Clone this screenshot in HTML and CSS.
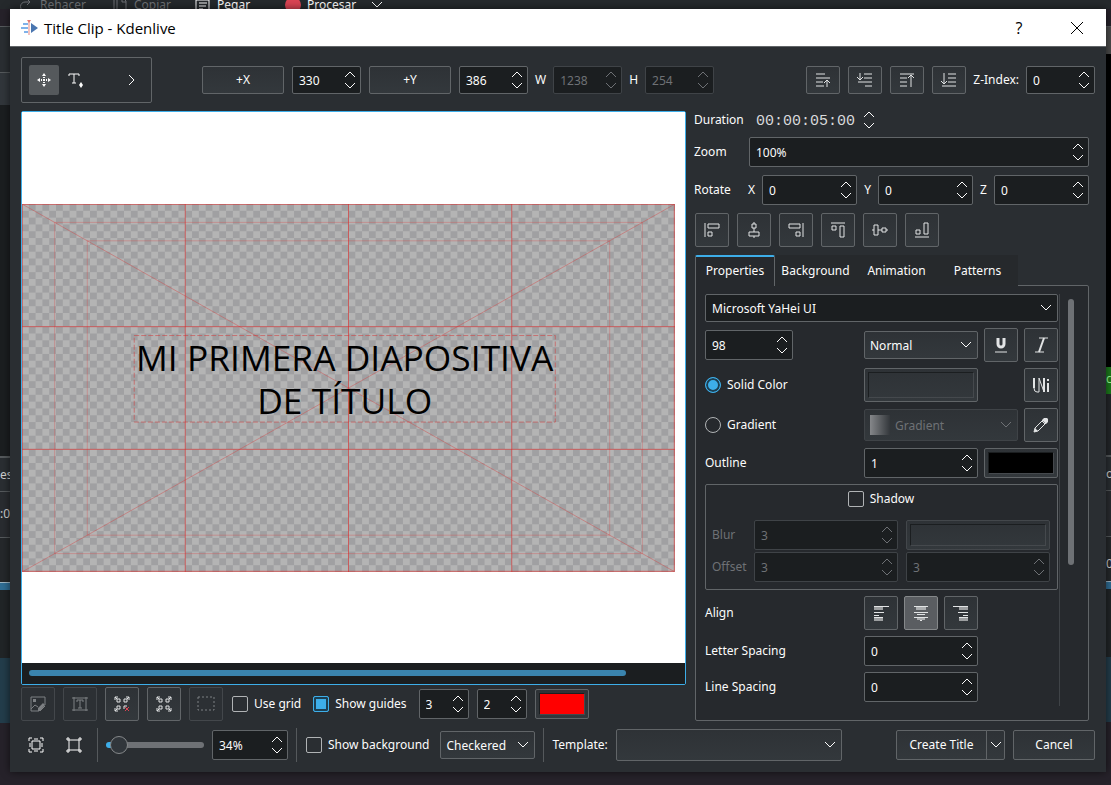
FILE: index.html
```html
<!DOCTYPE html>
<html lang="en">
<head>
    <meta charset="UTF-8">
    <meta name="viewport" content="width=device-width, initial-scale=1.0">
    <title>Title Clip - Kdenlive</title>
    <link rel="stylesheet" href="styles.css">
</head>
<body>
    <!-- shared glyphs -->
    <svg class="defs" width="0" height="0" aria-hidden="true">
        <symbol id="updown" viewBox="0 0 12 20"><path d="M1 7l5-5 5 5M1 13l5 5 5-5"/></symbol>
        <symbol id="down" viewBox="0 0 12 8"><path d="M1 1l5 5 5-5"/></symbol>
    </svg>

    <!-- main window, mostly hidden by the dialog -->
    <div class="app">
        <div class="app-toolbar">
            <svg class="dim" width="16" height="16" viewBox="0 0 16 16"><path d="M12 5H7a4 4 0 0 0 0 9M9 2l3 3-3 3"/></svg>
            <span class="dim app-redo">Rehacer</span>
            <svg class="dim" width="16" height="16" viewBox="0 0 16 16"><path d="M2 1v14M5 1h6l3 3v11H5zM10 1v4h4"/></svg>
            <span class="dim app-copy">Copiar</span>
            <svg width="16" height="16" viewBox="0 0 16 16"><path d="M1 3h13v12H1zM4 6h8M4 9h7M4 12h4"/></svg>
            <span class="app-paste">Pegar</span>
            <i class="record"></i>
            <span class="app-render">Procesar</span>
            <svg width="12" height="8"><use href="#down"/></svg>
        </div>
        <div class="app-left">
            <div class="s-bar"></div>
            <div class="s-dock"></div>
            <div class="s-field"></div>
            <div class="s-view"></div>
            <div class="s-label">es</div>
            <div class="s-time">:0</div>
            <div class="s-gap"></div>
            <div class="s-ruler"></div>
            <div class="s-track"></div>
            <div class="s-clip"></div>
        </div>
        <div class="app-right">
            <div class="s-bar"></div>
            <div class="s-grey"></div>
            <div class="s-monitor"></div>
            <div class="s-green">c</div>
            <div class="s-panel"></div>
            <div class="s-label">o</div>
            <div class="s-time"></div>
            <div class="s-gap">0</div>
            <div class="s-ruler"></div>
            <div class="s-track"></div>
            <div class="s-clip"></div>
        </div>
    </div>

    <main class="dialog">
        <header class="titlebar">
            <svg class="logo" width="20" height="18" viewBox="0 0 20 18">
                <path fill="#7fb2ea" d="M3 4h5v2H3zM1 8h7v2H1zM4 12h4v2H4z"/>
                <path fill="#f3c3bf" d="M8 2h2v14H8z"/><path fill="#e07a74" d="M7 1h4L9 4z"/>
                <path fill="#4a76b0" d="M11 4l7 5-7 5z"/>
            </svg>
            <h1>Title Clip - Kdenlive</h1>
            <button class="win-btn" aria-label="Help">?</button>
            <button class="win-btn" aria-label="Close"><svg width="14" height="14" viewBox="0 0 14 14"><path d="M1 1l12 12M13 1L1 13"/></svg></button>
        </header>

        <div class="toolbar">
            <div class="toolbox">
                <button class="tool active" aria-label="Selection tool"><svg width="16" height="16" viewBox="0 0 16 16"><path class="fill" d="M8 1l2 3H6zM8 15l2-3H6zM1 8l3-2v4zM15 8l-3-2v4zM7 7h2v2H7zM7 5h2v1H7zM7 10h2v1H7zM5 7h1v2H5zM10 7h1v2h-1z"/></svg></button>
                <button class="tool" aria-label="Add text"><svg width="16" height="16" viewBox="0 0 16 16"><path d="M1 4V2h10v2M6 2v9M4 11h4"/><path class="fill" d="M13 10l2 3-2 3-2-3z"/></svg></button>
                <button class="tool more" aria-label="More tools"><svg width="8" height="12" viewBox="0 0 8 12"><path d="M1 1l5 5-5 5"/></svg></button>
            </div>
            <button class="btn w-coord">+X</button>
            <span class="spin w-num"><input type="text" value="330" aria-label="X"><svg width="12" height="20"><use href="#updown"/></svg></span>
            <button class="btn w-coord">+Y</button>
            <span class="spin w-num"><input type="text" value="386" aria-label="Y"><svg width="12" height="20"><use href="#updown"/></svg></span>
            <label for="w">W</label>
            <span class="spin w-num disabled"><input type="text" id="w" value="1238" disabled><svg width="12" height="20"><use href="#updown"/></svg></span>
            <label for="h">H</label>
            <span class="spin w-num disabled"><input type="text" id="h" value="254" disabled><svg width="12" height="20"><use href="#updown"/></svg></span>
            <div class="z-tools">
                <button class="btn icon" aria-label="Raise"><svg width="16" height="16" viewBox="0 0 16 16"><path d="M1 2h9M1 6h14M1 10h7M1 14h8M12 15V8M9 11l3-3 3 3"/></svg></button>
                <button class="btn icon" aria-label="Lower"><svg width="16" height="16" viewBox="0 0 16 16"><path d="M7 2h8M7 6h8M1 10h14M8 14h7M3 1v7M0 5l3 3 3-3"/></svg></button>
                <button class="btn icon" aria-label="Raise to top"><svg width="16" height="16" viewBox="0 0 16 16"><path d="M1 2h14M1 6h7M1 10h7M1 14h7M12 15V3M9 6l3-3 3 3"/></svg></button>
                <button class="btn icon" aria-label="Lower to bottom"><svg width="16" height="16" viewBox="0 0 16 16"><path d="M7 2h8M7 6h8M7 10h8M1 14h14M3 1v11M0 9l3 3 3-3"/></svg></button>
            </div>
            <label for="zindex">Z-Index:</label>
            <span class="spin w-num"><input type="text" id="zindex" value="0"><svg width="12" height="20"><use href="#updown"/></svg></span>
        </div>

        <div class="body">
            <section class="editor">
                <div class="canvas">
                    <div class="view">
                        <svg class="slide" width="653" height="368" viewBox="0 0 1920 1080" preserveAspectRatio="none">
                            <defs>
                                <pattern id="checks" width="40" height="40" patternUnits="userSpaceOnUse">
                                    <path fill="#b4b4b4" d="M0 0h40v40H0z"/>
                                    <path fill="#a0a0a2" d="M20 0h20v20H20zM0 20h20v20H0z"/>
                                </pattern>
                            </defs>
                            <rect width="1920" height="1080" fill="url(#checks)"/>
                            <g class="safe">
                                <rect x="96" y="54" width="1728" height="972"/>
                                <rect x="192" y="108" width="1536" height="864"/>
                            </g>
                            <path class="diagonals" d="M0 0L1920 1080M1920 0L0 1080"/>
                            <path class="guides" d="M480 0v1080M960 0v1080M1440 0v1080M0 360h1920M0 720h1920"/>
                            <rect class="guides frame" x="1" y="1" width="1917" height="1077"/>
                            <rect class="selection" x="330" y="386" width="1238" height="254"/>
                            <text x="949" y="490">MI PRIMERA DIAPOSITIVA</text>
                            <text x="949" y="616">DE TÍTULO</text>
                        </svg>
                    </div>
                    <div class="hscroll"><div class="thumb"></div></div>
                </div>

                <div class="tools-row">
                    <button class="btn icon tall disabled" disabled aria-label="Background image"><svg width="16" height="16" viewBox="0 0 16 16"><path d="M9 15H1V1h14v8M1 13l4-4 3 2M8 14l6-6M10 15l5-5"/><path class="fill" d="M3 3h3v3H3zM8 12l5-5 2 2-5 6H8z"/></svg></button>
                    <button class="btn icon tall disabled" disabled aria-label="Fit text"><svg width="16" height="16" viewBox="0 0 16 16"><path d="M2 1v14M14 1v14M0 2h16M0 14h16M5 6V4h6v2M8 4v8M6 12h4"/></svg></button>
                    <button class="btn icon tall" aria-label="Unselect all"><svg width="16" height="16" viewBox="0 0 16 16"><path d="M1 4V1h3M12 1h3v3M1 12v3h3M1 1l2 2M15 1l-2 2M1 15l2-2M3 3h3v3H3zM10 3h3v3h-3zM3 10h3v3H3zM10 13v-3h3"/><path class="red" d="M11 11l4 4M15 11l-4 4"/></svg></button>
                    <button class="btn icon tall" aria-label="Select all"><svg width="16" height="16" viewBox="0 0 16 16"><path d="M1 4V1h3M12 1h3v3M1 12v3h3M15 12v3h-3M1 1l2 2M15 1l-2 2M1 15l2-2M15 15l-2-2M3 3h3v3H3zM10 3h3v3h-3zM3 10h3v3H3zM10 10h3v3h-3z"/></svg></button>
                    <button class="btn icon tall disabled" disabled aria-label="Select region"><svg width="18" height="16" viewBox="0 0 18 16"><path stroke-dasharray="2 2" d="M1 1h16v13H1z"/></svg></button>
                    <label class="check"><input type="checkbox">Use grid</label>
                    <label class="check"><input type="checkbox" checked>Show guides</label>
                    <span class="spin w-guide"><input type="text" value="3" aria-label="Vertical guides"><svg width="12" height="20"><use href="#updown"/></svg></span>
                    <span class="spin w-guide"><input type="text" value="2" aria-label="Horizontal guides"><svg width="12" height="20"><use href="#updown"/></svg></span>
                    <button class="swatch w-swatch" aria-label="Guide color"><span class="red-fill"></span></button>
                </div>
            </section>

            <aside class="side">
                <div class="line duration">
                    <label for="duration">Duration</label>
                    <span class="timecode"><input type="text" id="duration" value="00:00:05:00"><svg width="12" height="20"><use href="#updown"/></svg></span>
                </div>
                <div class="line zoom">
                    <label for="zoom">Zoom</label>
                    <span class="spin grow"><input type="text" id="zoom" value="100%"><svg width="12" height="20"><use href="#updown"/></svg></span>
                </div>
                <div class="line rotate">
                    <span class="caption">Rotate</span>
                    <label for="rx">X</label>
                    <span class="spin"><input type="text" id="rx" value="0"><svg width="12" height="20"><use href="#updown"/></svg></span>
                    <label for="ry">Y</label>
                    <span class="spin"><input type="text" id="ry" value="0"><svg width="12" height="20"><use href="#updown"/></svg></span>
                    <label for="rz">Z</label>
                    <span class="spin"><input type="text" id="rz" value="0"><svg width="12" height="20"><use href="#updown"/></svg></span>
                </div>
                <div class="line arrange">
                    <button class="btn icon tall" aria-label="Align left"><svg width="16" height="16" viewBox="0 0 16 16"><path d="M1 1v14M4 2h11v4H4zM4 10h4v4H4z"/></svg></button>
                    <button class="btn icon tall" aria-label="Center horizontally"><svg width="16" height="16" viewBox="0 0 16 16"><path d="M6 2h4v4H6zM3 10h10v4H3zM8 6v4M8 0v2M8 14v2"/></svg></button>
                    <button class="btn icon tall" aria-label="Align right"><svg width="16" height="16" viewBox="0 0 16 16"><path d="M15 1v14M1 2h11v4H1zM8 10h4v4H8z"/></svg></button>
                    <button class="btn icon tall" aria-label="Align top"><svg width="16" height="16" viewBox="0 0 16 16"><path d="M1 1h14M2 4h4v4H2zM10 4h4v11h-4z"/></svg></button>
                    <button class="btn icon tall" aria-label="Center vertically"><svg width="16" height="16" viewBox="0 0 16 16"><path d="M2 3h4v10H2zM10 6h4v4h-4zM6 8h4M0 8h2M14 8h2"/></svg></button>
                    <button class="btn icon tall" aria-label="Align bottom"><svg width="16" height="16" viewBox="0 0 16 16"><path d="M1 15h14M2 8h4v4H2zM10 1h4v11h-4z"/></svg></button>
                </div>

                <nav class="tabs">
                    <button class="tab active">Properties</button>
                    <button class="tab">Background</button>
                    <button class="tab">Animation</button>
                    <button class="tab">Patterns</button>
                </nav>
                <div class="panel">
                    <div class="props">
                        <span class="select dark full"><select aria-label="Font"><option>Microsoft YaHei UI</option></select><svg width="12" height="8"><use href="#down"/></svg></span>

                        <span class="spin w-size"><input type="text" value="98" aria-label="Font size"><svg width="12" height="20"><use href="#updown"/></svg></span>
                        <span class="select"><select aria-label="Font weight"><option>Normal</option></select><svg width="12" height="8"><use href="#down"/></svg></span>
                        <button class="btn icon tall" aria-label="Underline"><svg width="16" height="16" viewBox="0 0 16 16"><path class="bold" d="M5 1v6a3 3 0 0 0 6 0V1"/><path d="M2 15h12"/></svg></button>
                        <button class="btn icon tall" aria-label="Italic"><svg width="16" height="16" viewBox="0 0 16 16"><path d="M6 1h9M2 15h9"/><path class="semi" d="M11 1L6 15"/></svg></button>

                        <label class="radio"><input type="radio" name="fill" checked>Solid Color</label>
                        <button class="swatch tall" aria-label="Text color"><span class="empty"></span></button>
                        <button class="btn icon tall last" aria-label="Insert Unicode character"><svg width="18" height="16" viewBox="0 0 18 16"><path d="M2 1v10q0 4 3 4h2M7 1v14M7 1l5 14V1"/><path class="semi" d="M2 1v10M12 1v14M16 6v9M16 2v2"/></svg></button>

                        <label class="radio"><input type="radio" name="fill">Gradient</label>
                        <span class="select gradient disabled"><i class="gradient-chip"></i><select disabled aria-label="Gradient"><option>Gradient</option></select><svg width="12" height="8"><use href="#down"/></svg></span>
                        <button class="btn icon tall" aria-label="Edit gradient"><svg width="16" height="16" viewBox="0 0 16 16"><path d="M1 15l1-4 9-9q2-1 3 0t0 3l-9 9zM9 4l3 3"/><path class="fill" d="M1 15l1-4 3 3zM9 3l2-2h3l1 1v3l-2 2z"/></svg></button>

                        <label for="outline">Outline</label>
                        <span class="spin"><input type="text" id="outline" value="1"><svg width="12" height="20"><use href="#updown"/></svg></span>
                        <button class="swatch outline" aria-label="Outline color"><span class="black-fill"></span></button>

                        <fieldset class="shadow full">
                            <label class="check"><input type="checkbox">Shadow</label>
                            <label class="dim" for="blur">Blur</label>
                            <span class="spin disabled"><input type="text" id="blur" value="3" disabled><svg width="12" height="20"><use href="#updown"/></svg></span>
                            <button class="swatch disabled" disabled aria-label="Shadow color"><span class="empty"></span></button>
                            <label class="dim" for="offset">Offset</label>
                            <span class="spin disabled"><input type="text" id="offset" value="3" disabled><svg width="12" height="20"><use href="#updown"/></svg></span>
                            <span class="spin disabled"><input type="text" value="3" disabled aria-label="Vertical offset"><svg width="12" height="20"><use href="#updown"/></svg></span>
                        </fieldset>

                        <span class="row-label">Align</span>
                        <div class="aligns">
                            <button class="btn icon tall" aria-label="Left"><svg width="16" height="16" viewBox="0 0 16 16"><path class="fill" d="M1 1h15v1H1zM1 7h10v1H1zM1 10h5v1H1zM1 12h9v1H1z"/><path class="fill soft" d="M1 2h9v3H1zM1 13h9v3H1z"/></svg></button>
                            <button class="btn icon tall pressed" aria-label="Center"><svg width="16" height="16" viewBox="0 0 16 16"><path class="fill" d="M1 1h14v1H1zM1 7h14v1H1zM4 9h8v1H4zM1 12h14v1H1zM7 15h2v1H7z"/><path class="fill soft" d="M3 2h10v3H3zM4 13h8v2H4z"/></svg></button>
                            <button class="btn icon tall" aria-label="Right"><svg width="16" height="16" viewBox="0 0 16 16"><path class="fill" d="M0 1h15v1H0zM5 7h10v1H5zM10 10h5v1h-5zM6 12h9v1H6z"/><path class="fill soft" d="M6 2h9v3H6zM6 13h9v3H6z"/></svg></button>
                        </div>

                        <label class="row-label" for="letter">Letter Spacing</label>
                        <span class="spin"><input type="text" id="letter" value="0"><svg width="12" height="20"><use href="#updown"/></svg></span>

                        <label class="row-label" for="linesp">Line Spacing</label>
                        <span class="spin"><input type="text" id="linesp" value="0"><svg width="12" height="20"><use href="#updown"/></svg></span>
                    </div>
                    <div class="vscroll"><div class="thumb"></div></div>
                </div>
            </aside>
        </div>

        <footer class="bottom">
            <button class="flat" aria-label="Fit zoom"><svg width="16" height="16" viewBox="0 0 16 16"><path d="M1 4V1h3M12 1h3v3M1 12v3h3M15 12v3h-3M4 4h8v8H4zM6 2h4M6 14h4M2 6v4M14 6v4"/></svg></button>
            <button class="flat" aria-label="Original size"><svg width="16" height="16" viewBox="0 0 16 16"><path d="M3 3h10v10H3zM1 1h2v2H1zM13 1h2v2h-2zM1 13h2v2H1zM13 13h2v2h-2z"/></svg></button>
            <i class="sep"></i>
            <input type="range" class="slider" min="1" max="400" value="20" aria-label="Canvas zoom">
            <span class="spin w-zoom"><input type="text" value="34%" aria-label="Zoom level"><svg width="12" height="20"><use href="#updown"/></svg></span>
            <i class="sep"></i>
            <label class="check"><input type="checkbox">Show background</label>
            <span class="select w-bg"><select aria-label="Background type"><option>Checkered</option></select><svg width="12" height="8"><use href="#down"/></svg></span>
            <i class="sep"></i>
            <label for="template">Template:</label>
            <span class="select template"><select id="template"><option></option></select><svg width="12" height="8"><use href="#down"/></svg></span>
            <div class="actions">
                <button class="btn create">Create Title</button>
                <button class="btn create-more" aria-label="Create options"><svg width="12" height="8"><use href="#down"/></svg></button>
                <button class="btn w-coord cancel">Cancel</button>
            </div>
        </footer>
    </main>
</body>
</html>
```
FILE: styles.css
```css
:root {
    --bg: #2a2e32;
    --view: #1b1e20;
    --panel: #26292d;
    --line: #616568;
    --line-dim: #3f4347;
    --text: #fcfcfc;
    --dim: #6e7175;
    --accent: #3daee9;
}

* {
    box-sizing: border-box;
}

body {
    margin: 0;
    min-height: 100vh;
    position: relative;
    padding: 9px 5px 13px 10px;
    display: flex;
    overflow-x: hidden;
    background: #26222a;
    color: var(--text);
    font: 12px/16px "Noto Sans", "Open Sans", sans-serif;
}

button, input, select {
    font: inherit;
    color: inherit;
    margin: 0;
}

svg {
    fill: none;
    stroke: currentColor;
    stroke-width: 1;
    flex: none;
    display: block;
}

svg .fill {
    fill: currentColor;
    stroke: none;
}

svg .soft {
    opacity: 0.6;
}

svg .bold {
    stroke-width: 3;
}

svg .semi {
    stroke-width: 2;
}

svg .red {
    stroke: #da4453;
}

.defs {
    position: absolute;
}

.dim {
    color: var(--dim);
}

/* main window in the background */
.app {
    position: absolute;
    inset: 0;
    overflow: hidden;
    display: grid;
    grid-template-columns: 10px 1fr 5px;
    grid-template-rows: 9px 1fr;
}

.app-toolbar {
    grid-column: 1 / -1;
    display: flex;
    align-items: center;
    padding-left: 18px;
    gap: 6px;
    background: #25292c;
}

.app-redo {
    width: 66px;
}

.app-copy {
    width: 55px;
}

.app-paste {
    width: 62px;
}

.app-render {
    width: 58px;
}

.record {
    width: 16px;
    height: 16px;
    flex: none;
    border-radius: 50%;
    background: #da4453;
}

.app-left,
.app-right {
    display: flex;
    flex-direction: column;
    color: #d0d0d0;
}

.app-right {
    grid-column: 3;
}

.app-left > div,
.app-right > div {
    flex: none;
}

.s-bar {
    height: 18px;
    border-bottom: 1px solid #55595c;
}

.s-dock {
    height: 46px;
    background: var(--bg);
    border-bottom: 1px solid #55595c;
}

.s-field {
    height: 32px;
    background: #31363b;
}

.s-view {
    height: 351px;
    background: var(--view);
}

.s-grey {
    height: 27px;
    background: #4b4b4b;
}

.s-monitor {
    height: 313px;
    background: #000;
}

.s-green {
    height: 27px;
    background: #1c7a1c;
    color: #9f9;
    line-height: 24px;
}

.s-panel {
    height: 61px;
    background: #232629;
}

.s-label {
    height: 36px;
    line-height: 34px;
    background: var(--bg);
    border-top: 2px solid #55595c;
    border-bottom: 1px solid #55595c;
}

.s-time {
    height: 46px;
    line-height: 44px;
    background: #292c30;
    border-bottom: 1px solid #55595c;
}

.s-gap {
    height: 44px;
    line-height: 54px;
    background: #25282b;
}

.s-ruler {
    height: 8px;
    background: #2f6d94;
    border-top: 1px solid #9fb6c4;
}

.s-track {
    height: 68px;
    background: #212527;
}

.s-clip {
    height: 65px;
    background: #233d4b;
}

/* dialog */
.dialog {
    position: relative;
    flex: 1;
    min-width: 1080px;
    display: flex;
    flex-direction: column;
    background: var(--bg);
    box-shadow: 0 0 8px rgba(0, 0, 0, 0.6);
}

.titlebar {
    display: flex;
    align-items: center;
    height: 38px;
    padding-left: 10px;
    background: #fff;
    border-bottom: 1px solid #616568;
    color: #000;
}

.logo {
    stroke: none;
}

.titlebar h1 {
    flex: 1;
    margin: 0 0 0 4px;
    font: 15px/20px "Open Sans", sans-serif;
}

.win-btn {
    width: 58px;
    height: 37px;
    padding: 0;
    border: 0;
    background: none;
    display: grid;
    place-items: center;
    font: 16px "Open Sans", sans-serif;
}

/* controls */
.btn,
.swatch,
.select {
    border: 1px solid var(--line);
    border-radius: 2px;
    background: linear-gradient(#2e3236, #33383c);
}

.btn {
    height: 28px;
    padding: 0;
    text-align: center;
}

.btn.icon {
    width: 34px;
    display: grid;
    place-items: center;
    flex: none;
    color: #e2e4e5;
}

.btn.tall,
.swatch.tall {
    height: 34px;
}

.btn.pressed {
    background: #5a5d61;
    border-color: #85888a;
}

.btn.disabled {
    border-color: #43474b;
    background: #2c3034;
    color: #7d8083;
}

.spin {
    display: flex;
    align-items: center;
    height: 30px;
    min-width: 0;
    padding-right: 4px;
    border: 1px solid var(--line);
    border-radius: 2px;
    background: var(--view);
}

.spin input {
    flex: 1;
    width: 0;
    min-width: 0;
    padding: 1px 0 0 6px;
    border: 0;
    background: none;
    outline: none;
}

.disabled,
.disabled input,
.disabled select {
    color: var(--dim);
    border-color: var(--line-dim);
}

.select {
    position: relative;
    display: flex;
    align-items: center;
    height: 28px;
    padding-right: 5px;
}

.select select {
    flex: 1;
    min-width: 0;
    padding: 1px 0 0 5px;
    border: 0;
    background: none;
    appearance: none;
    opacity: 1;
}

.select.dark {
    background: var(--view);
}

.select.dark select {
    padding-left: 6px;
}

.swatch {
    display: flex;
    height: 30px;
    padding: 3px;
}

.swatch span {
    flex: 1;
    align-self: stretch;
    border: 1px solid #1b1e20;
    border-right-color: #45494d;
    border-bottom-color: #45494d;
}

.swatch.disabled {
    border-color: #43474b;
}

.red-fill {
    background: #f00;
}

.black-fill {
    background: #000;
}

.check,
.radio {
    display: flex;
    align-items: center;
    gap: 6px;
}

.check input,
.radio input {
    appearance: none;
    width: 16px;
    height: 16px;
    border: 1px solid #b0b3b5;
    border-radius: 2px;
    background: none;
}

.check input:checked {
    border-color: var(--accent);
    background: var(--accent);
    box-shadow: inset 0 0 0 2px #1c3f52;
}

.radio input {
    border-radius: 50%;
}

.radio input:checked {
    border-color: var(--accent);
    background: var(--accent);
    box-shadow: inset 0 0 0 2px #1c3f52;
}

.w-coord {
    width: 82px;
}

.w-num {
    width: 69px;
}

.w-guide {
    width: 50px;
}

.w-size {
    width: 88px;
}

.w-zoom {
    width: 76px;
}

.w-bg {
    width: 95px;
}

.w-swatch {
    width: 54px;
}

/* top toolbar */
.toolbar {
    display: flex;
    align-items: center;
    gap: 8px;
    padding: 10px 11px 8px;
}

.toolbar .spin {
    height: 28px;
}

.toolbar label {
    margin: 0 -1px;
}

.toolbox {
    display: flex;
    align-items: center;
    width: 131px;
    height: 46px;
    margin-right: 42px;
    padding: 0 7px;
    border: 1px solid var(--line);
    border-radius: 2px;
}

.tool {
    width: 30px;
    height: 30px;
    padding: 0;
    border: 0;
    border-radius: 2px;
    background: none;
    display: grid;
    place-items: center;
    margin-right: 2px;
}

.tool.active {
    background: #55595c;
}

.tool.more {
    margin-left: auto;
    margin-right: -3px;
}

.z-tools {
    display: flex;
    gap: 8px;
    margin-left: auto;
}

/* main area */
.body {
    flex: 1;
    display: flex;
    gap: 8px;
    padding: 0 17px 0 11px;
}

.editor {
    flex: 1;
    min-width: 0;
    display: flex;
    flex-direction: column;
}

.canvas {
    flex: 1;
    display: flex;
    flex-direction: column;
    border: 1px solid var(--accent);
    border-radius: 2px;
}

.view {
    flex: 1;
    display: flex;
    align-items: center;
    overflow: hidden;
    background: #fff;
}

.slide text {
    font: 104px "Open Sans", sans-serif;
    fill: #000;
    stroke: none;
    text-anchor: middle;
}

.slide path,
.slide rect {
    vector-effect: non-scaling-stroke;
}

.slide defs path,
.slide > rect {
    stroke: none;
    shape-rendering: crispEdges;
}

.safe rect {
    stroke: rgba(225, 60, 60, 0.3);
}

.diagonals {
    stroke: rgba(215, 60, 60, 0.4);
}

.slide .guides {
    stroke: rgba(222, 40, 40, 0.6);
    shape-rendering: crispEdges;
}

.slide .selection {
    stroke: rgba(215, 50, 50, 0.5);
    stroke-dasharray: 5 2;
    shape-rendering: crispEdges;
}

.hscroll {
    height: 21px;
    padding: 7px;
    background: var(--view);
}

.hscroll .thumb {
    width: 92%;
    height: 6px;
    border-radius: 3px;
    background: #3a84ae;
}

.tools-row {
    display: flex;
    align-items: center;
    gap: 8px;
    padding-top: 2px;
}

.tools-row .check:first-of-type {
    margin: 0 4px 0 1px;
}

.tools-row .check + .spin {
    margin-left: 4px;
}

/* right column */
.side {
    width: 395px;
    display: flex;
    flex-direction: column;
}

.line {
    display: flex;
    align-items: center;
}

.duration {
    height: 18px;
}

.duration label {
    width: 62px;
}

.timecode {
    display: flex;
    align-items: center;
    gap: 8px;
}

.timecode input {
    width: 99px;
    padding: 3px 0 0;
    border: 0;
    background: none;
    color: #d8dadb;
    font: 15px/18px "Liberation Mono", monospace;
}

.zoom {
    margin-top: 8px;
}

.zoom label {
    width: 55px;
}

.grow {
    flex: 1;
}

.rotate {
    margin-top: 8px;
    gap: 7px;
}

.rotate .caption {
    width: 47px;
}

.rotate .spin {
    flex: 1;
}

.arrange {
    margin: 8px 0 8px 1px;
    gap: 8px;
}

.tabs {
    position: relative;
    display: flex;
    margin-bottom: -1px;
    padding-left: 1px;
}

.tab {
    height: 31px;
    width: 81px;
    padding: 0;
    border: 1px solid transparent;
    background: #26292c;
}

.tab.active {
    width: 80px;
    padding-bottom: 2px;
    border-color: var(--line);
    border-top: 2px solid var(--accent);
    border-bottom: 0;
    border-radius: 2px 2px 0 0;
    background: var(--panel);
}

.panel {
    flex: 1;
    display: flex;
    margin-left: 1px;
    padding: 8px 14px 14px 9px;
    border: 1px solid var(--line);
    border-radius: 0 2px 2px 2px;
    background: var(--panel);
}

.props {
    flex: 1;
    display: grid;
    grid-template-columns: 1fr 114px 34px 34px;
    gap: 6px;
    align-items: center;
    align-content: start;
    padding-right: 1px;
    border-right: 1px solid var(--line-dim);
}

.full {
    grid-column: 1 / -1;
}

.last {
    grid-column: 4;
}

.row-label {
    grid-column: 1;
}

.gradient {
    grid-column: span 2;
    height: 32px;
}

.gradient-chip {
    width: 20px;
    height: 20px;
    margin-left: 5px;
    background: linear-gradient(90deg, #85878a, #33373b);
}

.outline {
    grid-column: span 2;
}

.shadow {
    min-width: 0;
    margin: 0;
    padding: 6px 7px 7px 6px;
    border: 1px solid var(--line);
    border-radius: 2px;
    display: grid;
    grid-template-columns: 34px 1fr 1fr;
    gap: 2px 8px;
    align-items: center;
}

.shadow .check {
    grid-column: 1 / -1;
    justify-self: center;
    margin-bottom: 11px;
}

.aligns {
    display: flex;
    justify-content: space-between;
}

.vscroll {
    padding: 5px 0 0 8px;
}

.vscroll .thumb {
    width: 6px;
    height: 266px;
    border-radius: 3px;
    background: #6e7175;
}

/* footer */
.bottom {
    display: flex;
    align-items: center;
    gap: 8px;
    padding: 7px 11px 10px;
}

.flat {
    width: 30px;
    height: 34px;
    padding: 0;
    border: 0;
    background: none;
    display: grid;
    place-items: center;
}

.sep {
    width: 1px;
    height: 34px;
    background: #55595c;
}

.slider {
    appearance: none;
    width: 98px;
    height: 20px;
    background: none;
}

.slider::-webkit-slider-runnable-track {
    height: 6px;
    border-radius: 3px;
    background: linear-gradient(90deg, var(--accent) 8%, #6e7175 8%);
}

.slider::-webkit-slider-thumb {
    appearance: none;
    width: 18px;
    height: 18px;
    margin-top: -6px;
    border: 1px solid #85888a;
    border-radius: 50%;
    background: #31363b;
}

.bottom .check {
    margin: 0 3px 0 1px;
}

.template {
    width: 226px;
    height: 32px;
}

.actions {
    display: flex;
    margin-left: auto;
}

.actions .btn {
    height: 30px;
}

.create {
    width: 91px;
    border-radius: 2px 0 0 2px;
}

.create-more {
    width: 19px;
    margin-left: -1px;
    border-radius: 0 2px 2px 0;
    display: grid;
    place-items: center;
}

.cancel {
    margin-left: 8px;
}
```
